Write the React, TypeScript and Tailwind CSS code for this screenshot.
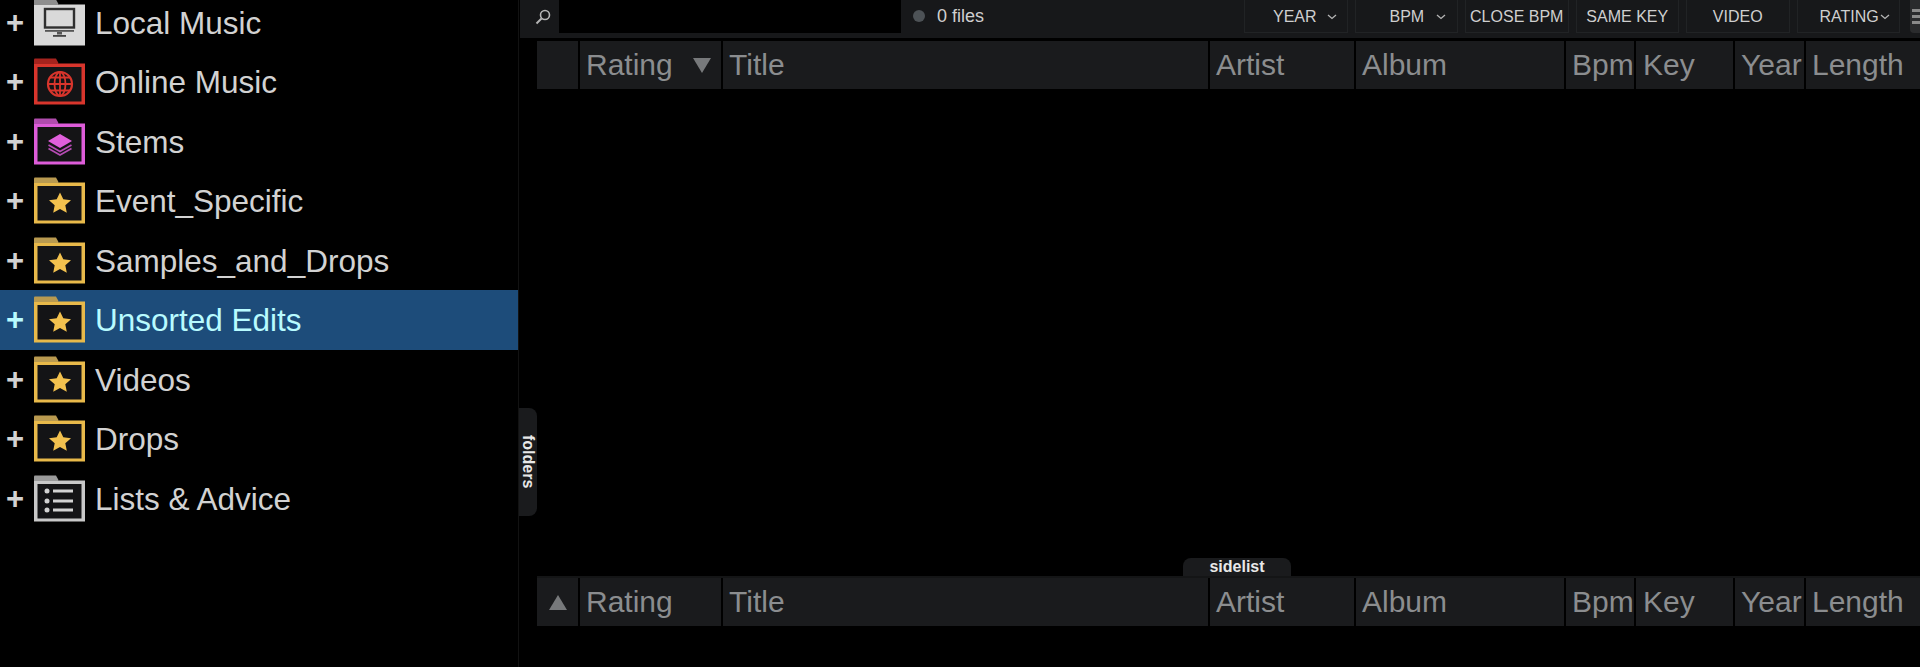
import React from "react";

const Frame = ({ color, fill, tab, children }: { color: string; fill: string; tab: string; children?: React.ReactNode }) => (
  <svg width="52" height="47" viewBox="0 0 52 47" className="shrink-0" aria-hidden="true">
    <path d="M0 6V1.5Q0 0.5 1 0.5H22L25 6Z" fill={tab} />
    <path d="M0 6H25V5.5H51V46.5H0Z" fill={color} />
    <rect x="3.5" y="9" width="44" height="34.5" fill={fill} />
    {children}
  </svg>
);

const Star = () => (
  <path d="M26 15.5l3.300 6.800 7.700.9-5.700 5.100 1.500 7.500-6.800-3.800-6.800 3.800 1.500-7.500-5.700-5.100 7.700-.9z" fill="#f2c14e" />
);

const Monitor = () => (
  <g>
    <rect x="11" y="10" width="29" height="18.500" fill="none" stroke="#2f2f2f" strokeWidth="2.400" />
    <rect x="11" y="31" width="29" height="1.800" fill="#555" />
    <rect x="23" y="33" width="5" height="2.500" fill="#555" />
    <rect x="19" y="36" width="13" height="1.800" fill="#444" />
  </g>
);

const Globe = () => (
  <g fill="none" stroke="#d8352c" strokeWidth="1.800">
    <circle cx="26" cy="26" r="12" strokeWidth="2.200" />
    <ellipse cx="26" cy="26" rx="5.500" ry="12" />
    <path d="M26 14V38M14 26H38M16 19.500H36M16 32.500H36" />
  </g>
);

const Layers = () => (
  <g>
    <path d="M26 16L38 23L26 30L14 23Z" fill="#e05fdc" />
    <path d="M14.500 27L26 33.500L37.500 27M14.500 30.500L26 37L37.500 30.500" fill="none" stroke="#b64cb4" strokeWidth="1.700" />
  </g>
);

const ListGlyph = () => (
  <g fill="#d2d2d2">
    <circle cx="13" cy="16" r="2.500" />
    <circle cx="13" cy="26" r="2.500" />
    <circle cx="13" cy="35" r="2.500" />
    <rect x="19" y="14.500" width="20" height="3" />
    <rect x="19" y="24.500" width="20" height="3" />
    <rect x="19" y="33.500" width="20" height="3" />
  </g>
);

const gold = { color: "#e8b94a", fill: "#141416", tab: "#b99a50" };

const rows = [
  { name: "Local Music", color: "#d9d9d9", fill: "#d9d9d9", tab: "#8e8e8e", glyph: <Monitor /> },
  { name: "Online Music", color: "#d8352c", fill: "#141416", tab: "#a5231e", glyph: <Globe /> },
  { name: "Stems", color: "#dd5cd9", fill: "#141416", tab: "#b04cae", glyph: <Layers /> },
  { name: "Event_Specific", ...gold, glyph: <Star /> },
  { name: "Samples_and_Drops", ...gold, glyph: <Star /> },
  { name: "Unsorted Edits", ...gold, glyph: <Star />, selected: true },
  { name: "Videos", ...gold, glyph: <Star /> },
  { name: "Drops", ...gold, glyph: <Star /> },
  { name: "Lists & Advice", color: "#c8c8c8", fill: "#141416", tab: "#9a9a9a", glyph: <ListGlyph /> },
];

const columns = ["Rating", "Title", "Artist", "Album", "Bpm", "Key", "Year", "Length"];

const Triangle = ({ up }: { up?: boolean }) => (
  <svg width="18" height="15" viewBox="0 0 18 15" aria-hidden="true" className="shrink-0">
    <path d={up ? "M9 0L18 15H0Z" : "M0 0H18L9 15Z"} fill="#77797b" />
  </svg>
);

const HeaderRow = ({ sortUp }: { sortUp?: boolean }) => (
  <div className="ml-[17px] grid h-[48px] shrink-0 grid-cols-[41px_141px_485px_144px_208px_68px_97px_69px_114px] gap-x-[2px] text-[30px] leading-[48px] text-[#8b8d8f]">
    <div className="flex items-center justify-center bg-[#1a1b1d]">{sortUp && <Triangle up />}</div>
    {columns.map((c) => (
      <div
        key={c}
        className={`flex items-center justify-between overflow-hidden whitespace-nowrap bg-[#1a1b1d] pr-[10px] ${c === "Key" ? "pl-[7px]" : "pl-[6px]"}`}
      >
        <span>{c}</span>
        {c === "Rating" && !sortUp && <Triangle />}
      </div>
    ))}
  </div>
);

const Chevron = () => (
  <svg width="10" height="6" viewBox="0 0 10 6" aria-hidden="true" className="shrink-0">
    <path d="M1 1L5 4.500L9 1" fill="none" stroke="#b5b5b5" strokeWidth="1.300" />
  </svg>
);

const buttons = [
  { label: "YEAR", chev: true, cls: "pl-[28px] gap-[10px] justify-start" },
  { label: "BPM", chev: true, cls: "pl-[34px] gap-[12px] justify-start" },
  { label: "CLOSE BPM", chev: false, cls: "justify-center" },
  { label: "SAME KEY", chev: false, cls: "justify-center" },
  { label: "VIDEO", chev: false, cls: "justify-center" },
  { label: "RATING", chev: true, cls: "pl-[22px] gap-[1px] justify-start" },
];

export default function App() {
  return (
    <div className="relative flex h-[667px] w-[1920px] overflow-hidden bg-black font-['Liberation_Sans',Arial,sans-serif]">
      <aside className="w-[519px] shrink-0 border-r border-r-[#121212]">
        <div className="mt-[-7.500px]">
          {rows.map((r) => (
            <div
              key={r.name}
              className={`flex h-[59.500px] items-center pl-[6px] ${r.selected ? "bg-[#1d4c7a] text-[#b8fbff]" : "text-[#d2d2d2]"}`}
            >
              <span className="w-[28px] text-[31px] font-bold leading-none">+</span>
              <Frame color={r.color} fill={r.fill} tab={r.tab}>
                {r.glyph}
              </Frame>
              <span className="ml-[9px] mt-[2px] whitespace-nowrap text-[31.500px] leading-none">{r.name}</span>
            </div>
          ))}
        </div>
      </aside>

      <main className="flex min-w-0 flex-1 flex-col pl-[1px]">
        <div className="flex h-[38px] shrink-0 items-start bg-[#17181a]">
          <div className="flex h-[33px] w-[39px] shrink-0 items-center justify-center pl-[6px] pt-[1px]">
            <svg width="18" height="18" viewBox="0 0 18 18" aria-hidden="true">
              <circle cx="11" cy="7" r="4.500" fill="none" stroke="#b5b5b5" strokeWidth="1.600" />
              <path d="M7.500 10.500L2.500 15.500" stroke="#b5b5b5" strokeWidth="2" />
            </svg>
          </div>
          <div className="h-[33px] w-[342px] shrink-0 bg-black" />
          <div className="ml-[12px] mt-[10px] h-[12px] w-[12px] shrink-0 rounded-full bg-[#4d5256]" />
          <span className="ml-[12px] mt-[6px] text-[18px] leading-[21px] text-[#cfcfcf]">0 files</span>
          <div className="ml-auto flex h-[33px] items-stretch gap-[7px]">
            {buttons.map((b) => (
              <div
                key={b.label}
                className={`flex w-[103.500px] items-center whitespace-nowrap border border-t-0 border-[#212325] pt-[2px] text-[16px] text-[#cfcfcf] ${b.cls}`}
              >
                <span>{b.label}</span>
                {b.chev && <Chevron />}
              </div>
            ))}
          </div>
          <div className="ml-[10px] flex h-[33px] w-[10px] flex-col justify-center gap-[3px] rounded-bl-[4px] bg-[#2a2b2d] pl-[2px]">
            <span className="h-[3px] w-[8px] bg-[#8a8a8a]" />
            <span className="h-[3px] w-[8px] bg-[#8a8a8a]" />
            <span className="h-[3px] w-[8px] bg-[#8a8a8a]" />
          </div>
        </div>

        <div className="mt-[3px]">
          <HeaderRow />
        </div>

        <div className="h-[487px] shrink-0" />

        <div className="ml-[17px] h-[2px] shrink-0 bg-[#141516]" />
        <HeaderRow sortUp />
      </main>

      <div className="absolute left-[519px] top-[408px] flex h-[108px] w-[18px] items-center justify-center rounded-r-[8px] bg-[#1a1b1d]">
        <span className="text-[16px] font-bold leading-none text-[#e8e8e8] [writing-mode:vertical-rl]">folders</span>
      </div>
      <div className="absolute left-[1183px] top-[558px] flex h-[18px] w-[108px] items-center justify-center rounded-t-[8px] bg-[#1a1b1d]">
        <span className="text-[16px] font-bold leading-none text-[#e8e8e8]">sidelist</span>
      </div>
    </div>
  );
}
